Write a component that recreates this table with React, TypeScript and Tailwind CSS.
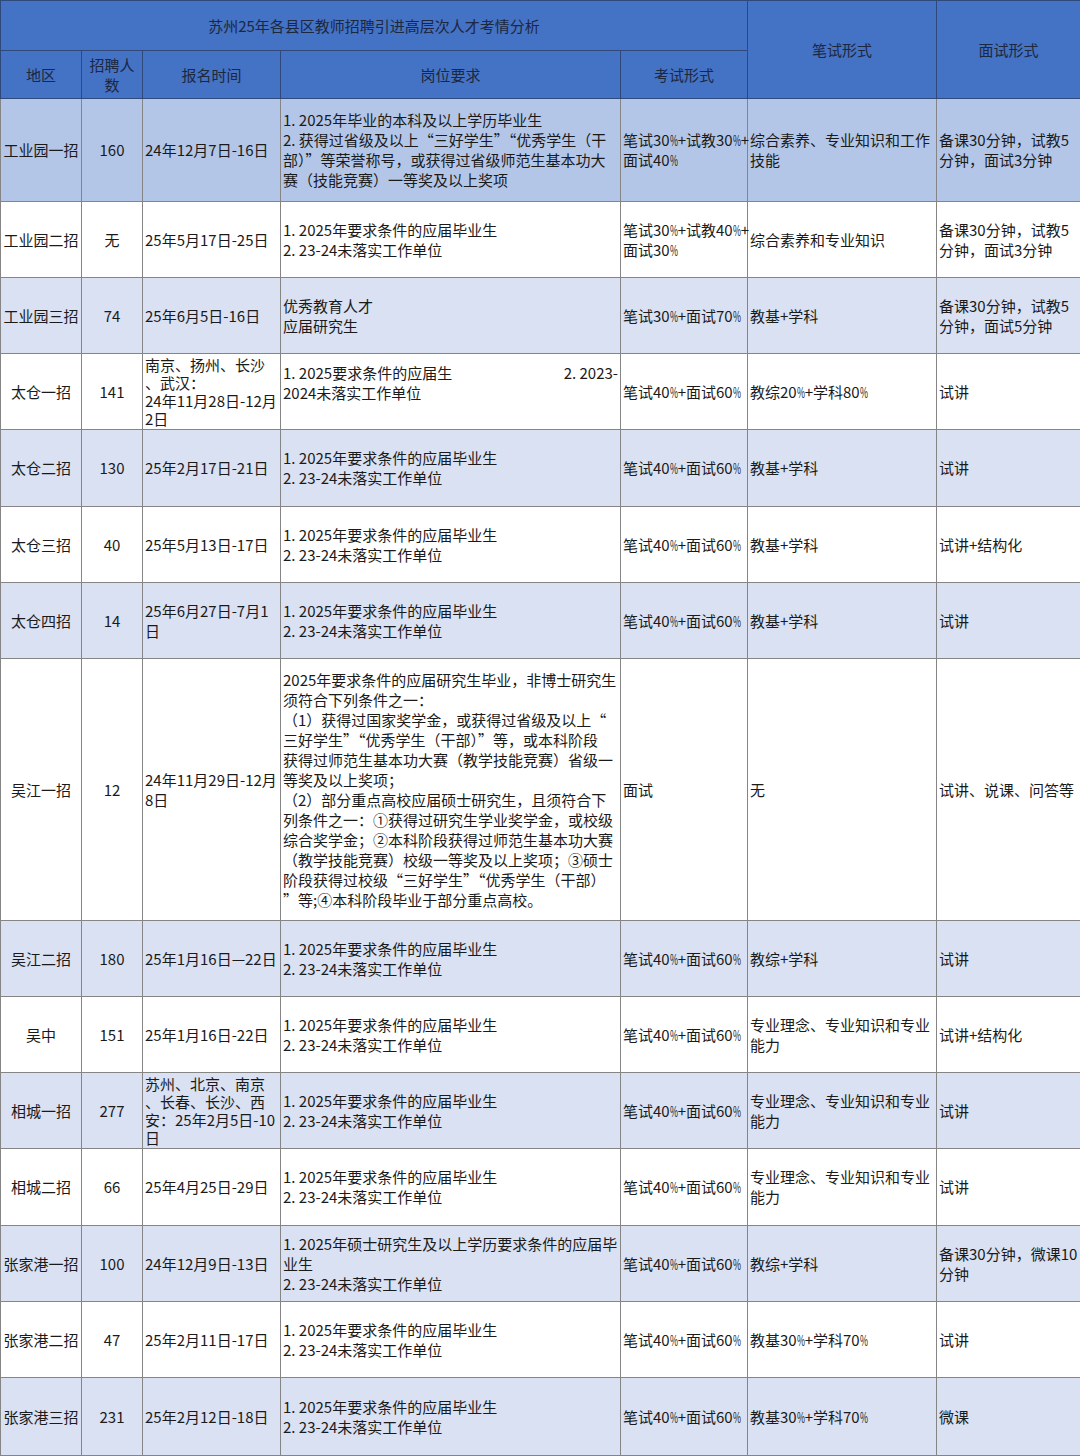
import React from "react";

type Row = {
  area: string;
  count: string;
  date: string[];
  req: React.ReactNode;
  exam: string[];
  written: string[];
  interview: string[];
  bg: string;
  h: string;
  tightDate?: boolean;
};

const std = ["1. 2025年要求条件的应届毕业生", "2. 23-24未落实工作单位"];
const light = "bg-[#d9e1f2]";

// the sheet's font draws a much narrower percent sign than Noto does
function fmt(s: string) {
  const parts = s.split("%");
  return parts.map((p, i) => (
    <React.Fragment key={i}>
      {p}
      {i < parts.length - 1 && (
        <span className="inline-block w-[8px] overflow-visible">
          <span className="inline-block origin-left scale-x-[0.58]">%</span>
        </span>
      )}
    </React.Fragment>
  ));
}

function Lines({ lines }: { lines: string[] }) {
  return (
    <>
      {lines.map((l, i) => (
        <div key={i} className="whitespace-nowrap">
          {fmt(l)}
        </div>
      ))}
    </>
  );
}

const rows: Row[] = [
  {
    area: "工业园一招",
    count: "160",
    date: ["24年12月7日-16日"],
    req: (
      <Lines
        lines={[
          "1. 2025年毕业的本科及以上学历毕业生",
          "2. 获得过省级及以上“三好学生”“优秀学生（干",
          "部）”等荣誉称号，或获得过省级师范生基本功大",
          "赛（技能竞赛）一等奖及以上奖项",
        ]}
      />
    ),
    exam: ["笔试30%+试教30%+", "面试40%"],
    written: ["综合素养、专业知识和工作", "技能"],
    interview: ["备课30分钟，试教5", "分钟，面试3分钟"],
    bg: "bg-[#b4c6e7]",
    h: "h-[103px]",
  },
  {
    area: "工业园二招",
    count: "无",
    date: ["25年5月17日-25日"],
    req: <Lines lines={std} />,
    exam: ["笔试30%+试教40%+", "面试30%"],
    written: ["综合素养和专业知识"],
    interview: ["备课30分钟，试教5", "分钟，面试3分钟"],
    bg: "bg-white",
    h: "h-[76px]",
  },
  {
    area: "工业园三招",
    count: "74",
    date: ["25年6月5日-16日"],
    req: <Lines lines={["优秀教育人才", "应届研究生"]} />,
    exam: ["笔试30%+面试70%"],
    written: ["教基+学科"],
    interview: ["备课30分钟，试教5", "分钟，面试5分钟"],
    bg: light,
    h: "h-[76px]",
  },
  {
    area: "太仓一招",
    count: "141",
    date: ["南京、扬州、长沙", "、武汉：", "24年11月28日-12月", "2日"],
    tightDate: true,
    req: (
      <div className="-mt-[18px]">
        <div className="flex justify-between whitespace-nowrap">
          <span>1. 2025要求条件的应届生</span>
          <span>2. 2023-</span>
        </div>
        <div className="whitespace-nowrap">2024未落实工作单位</div>
      </div>
    ),
    exam: ["笔试40%+面试60%"],
    written: ["教综20%+学科80%"],
    interview: ["试讲"],
    bg: "bg-white",
    h: "h-[76px]",
  },
  {
    area: "太仓二招",
    count: "130",
    date: ["25年2月17日-21日"],
    req: <Lines lines={std} />,
    exam: ["笔试40%+面试60%"],
    written: ["教基+学科"],
    interview: ["试讲"],
    bg: light,
    h: "h-[77px]",
  },
  {
    area: "太仓三招",
    count: "40",
    date: ["25年5月13日-17日"],
    req: <Lines lines={std} />,
    exam: ["笔试40%+面试60%"],
    written: ["教基+学科"],
    interview: ["试讲+结构化"],
    bg: "bg-white",
    h: "h-[76px]",
  },
  {
    area: "太仓四招",
    count: "14",
    date: ["25年6月27日-7月1", "日"],
    req: <Lines lines={std} />,
    exam: ["笔试40%+面试60%"],
    written: ["教基+学科"],
    interview: ["试讲"],
    bg: light,
    h: "h-[76px]",
  },
  {
    area: "吴江一招",
    count: "12",
    date: ["24年11月29日-12月", "8日"],
    req: (
      <Lines
        lines={[
          "2025年要求条件的应届研究生毕业，非博士研究生",
          "须符合下列条件之一：",
          "（1）获得过国家奖学金，或获得过省级及以上“",
          "三好学生”“优秀学生（干部）”等，或本科阶段",
          "获得过师范生基本功大赛（教学技能竞赛）省级一",
          "等奖及以上奖项；",
          "（2）部分重点高校应届硕士研究生，且须符合下",
          "列条件之一：①获得过研究生学业奖学金，或校级",
          "综合奖学金；②本科阶段获得过师范生基本功大赛",
          "（教学技能竞赛）校级一等奖及以上奖项；③硕士",
          "阶段获得过校级“三好学生”“优秀学生（干部）",
          "”等;④本科阶段毕业于部分重点高校。",
        ]}
      />
    ),
    exam: ["面试"],
    written: ["无"],
    interview: ["试讲、说课、问答等"],
    bg: "bg-white",
    h: "h-[262px]",
  },
  {
    area: "吴江二招",
    count: "180",
    date: ["25年1月16日—22日"],
    req: <Lines lines={std} />,
    exam: ["笔试40%+面试60%"],
    written: ["教综+学科"],
    interview: ["试讲"],
    bg: light,
    h: "h-[76px]",
  },
  {
    area: "吴中",
    count: "151",
    date: ["25年1月16日-22日"],
    req: <Lines lines={std} />,
    exam: ["笔试40%+面试60%"],
    written: ["专业理念、专业知识和专业", "能力"],
    interview: ["试讲+结构化"],
    bg: "bg-white",
    h: "h-[76px]",
  },
  {
    area: "相城一招",
    count: "277",
    date: ["苏州、北京、南京", "、长春、长沙、西", "安：25年2月5日-10", "日"],
    tightDate: true,
    req: <Lines lines={std} />,
    exam: ["笔试40%+面试60%"],
    written: ["专业理念、专业知识和专业", "能力"],
    interview: ["试讲"],
    bg: light,
    h: "h-[76px]",
  },
  {
    area: "相城二招",
    count: "66",
    date: ["25年4月25日-29日"],
    req: <Lines lines={std} />,
    exam: ["笔试40%+面试60%"],
    written: ["专业理念、专业知识和专业", "能力"],
    interview: ["试讲"],
    bg: "bg-white",
    h: "h-[77px]",
  },
  {
    area: "张家港一招",
    count: "100",
    date: ["24年12月9日-13日"],
    req: (
      <Lines
        lines={[
          "1. 2025年硕士研究生及以上学历要求条件的应届毕",
          "业生",
          "2. 23-24未落实工作单位",
        ]}
      />
    ),
    exam: ["笔试40%+面试60%"],
    written: ["教综+学科"],
    interview: ["备课30分钟，微课10", "分钟"],
    bg: light,
    h: "h-[76px]",
  },
  {
    area: "张家港二招",
    count: "47",
    date: ["25年2月11日-17日"],
    req: <Lines lines={std} />,
    exam: ["笔试40%+面试60%"],
    written: ["教基30%+学科70%"],
    interview: ["试讲"],
    bg: "bg-white",
    h: "h-[76px]",
  },
  {
    area: "张家港三招",
    count: "231",
    date: ["25年2月12日-18日"],
    req: <Lines lines={std} />,
    exam: ["笔试40%+面试60%"],
    written: ["教基30%+学科70%"],
    interview: ["微课"],
    bg: light,
    h: "h-[78px]",
  },
];

const hd = "border border-[#2f4a7a] text-center align-middle font-normal";
const td = "border border-[#858585] align-middle px-[2px] overflow-visible";

export default function App() {
  return (
    <div
      className="w-[1080px] h-[1456px] overflow-hidden bg-white text-[15px] leading-[20px] text-[#1a1a1a]"
      style={{ fontFamily: '"Noto Sans CJK SC", "Noto Sans", sans-serif' }}
    >
      <table className="w-[1080px] table-fixed border-collapse">
        <colgroup>
          <col className="w-[81px]" />
          <col className="w-[61px]" />
          <col className="w-[138px]" />
          <col className="w-[340px]" />
          <col className="w-[127px]" />
          <col className="w-[189px]" />
          <col className="w-[144px]" />
        </colgroup>
        <thead className="bg-[#4472c4] text-[#1c2740]">
          <tr className="h-[50px]">
            <th colSpan={5} className={hd}>
              苏州25年各县区教师招聘引进高层次人才考情分析
            </th>
            <th rowSpan={2} className={hd}>
              笔试形式
            </th>
            <th rowSpan={2} className={hd}>
              面试形式
            </th>
          </tr>
          <tr className="h-[48px]">
            <th className={hd}>地区</th>
            <th className={`${hd} leading-[20px]`}>
              招聘人
              <br />数
            </th>
            <th className={hd}>报名时间</th>
            <th className={hd}>岗位要求</th>
            <th className={hd}>考试形式</th>
          </tr>
        </thead>
        <tbody>
          {rows.map((r) => (
            <tr key={r.area} className={`${r.h} ${r.bg}`}>
              <td className={`${td} text-center whitespace-nowrap`}>{r.area}</td>
              <td className={`${td} text-center`}>{r.count}</td>
              <td className={`${td} ${r.tightDate ? "leading-[18px]" : ""}`}>
                <Lines lines={r.date} />
              </td>
              <td className={td}>{r.req}</td>
              <td className={td}>
                <Lines lines={r.exam} />
              </td>
              <td className={td}>
                <Lines lines={r.written} />
              </td>
              <td className={td}>
                <Lines lines={r.interview} />
              </td>
            </tr>
          ))}
        </tbody>
      </table>
    </div>
  );
}
